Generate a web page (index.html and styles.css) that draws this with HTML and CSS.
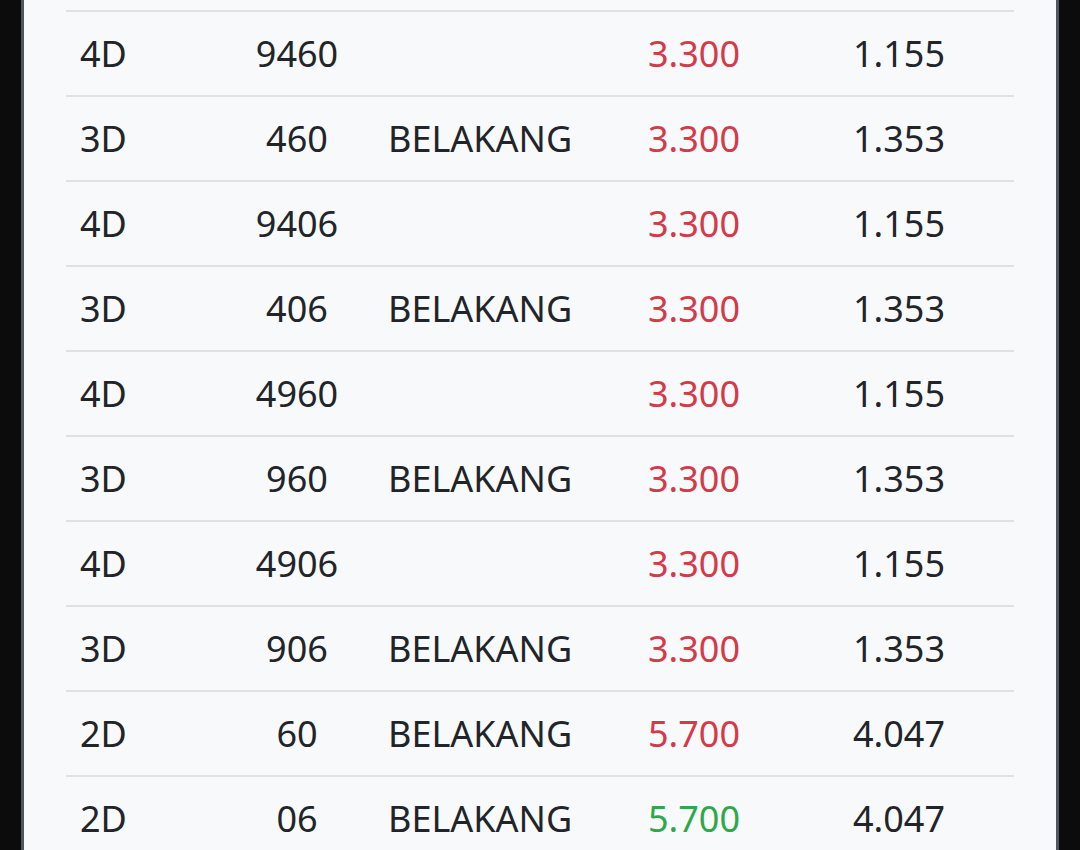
FILE: index.html
```html
<!DOCTYPE html>
<html>
<head>
<meta charset="utf-8">
<link rel="stylesheet" href="styles.css">
</head>
<body>
<div class="screen">
  <div class="panel">
    <div class="table">
      <div class="row"><div class="c1">4D</div><div class="c2">9460</div><div class="c3"></div><div class="c4 red">3.300</div><div class="c5">1.155</div></div>
      <div class="row"><div class="c1">3D</div><div class="c2">460</div><div class="c3">BELAKANG</div><div class="c4 red">3.300</div><div class="c5">1.353</div></div>
      <div class="row"><div class="c1">4D</div><div class="c2">9406</div><div class="c3"></div><div class="c4 red">3.300</div><div class="c5">1.155</div></div>
      <div class="row"><div class="c1">3D</div><div class="c2">406</div><div class="c3">BELAKANG</div><div class="c4 red">3.300</div><div class="c5">1.353</div></div>
      <div class="row"><div class="c1">4D</div><div class="c2">4960</div><div class="c3"></div><div class="c4 red">3.300</div><div class="c5">1.155</div></div>
      <div class="row"><div class="c1">3D</div><div class="c2">960</div><div class="c3">BELAKANG</div><div class="c4 red">3.300</div><div class="c5">1.353</div></div>
      <div class="row"><div class="c1">4D</div><div class="c2">4906</div><div class="c3"></div><div class="c4 red">3.300</div><div class="c5">1.155</div></div>
      <div class="row"><div class="c1">3D</div><div class="c2">906</div><div class="c3">BELAKANG</div><div class="c4 red">3.300</div><div class="c5">1.353</div></div>
      <div class="row"><div class="c1">2D</div><div class="c2">60</div><div class="c3">BELAKANG</div><div class="c4 red">5.700</div><div class="c5">4.047</div></div>
      <div class="row"><div class="c1">2D</div><div class="c2">06</div><div class="c3">BELAKANG</div><div class="c4 green">5.700</div><div class="c5">4.047</div></div>
    </div>
  </div>
</div>
</body>
</html>
```

FILE: styles.css
```css
html, body {
  margin: 0;
  padding: 0;
  background: #0c0c0c;
}
.screen {
  width: 1080px;
  height: 850px;
  overflow: hidden;
  display: flex;
  justify-content: flex-start;
  padding-left: 21px;
  box-sizing: border-box;
}
.panel {
  width: 1038px;
  height: 850px;
  flex-shrink: 0;
  background: #f8f9fa;
  border-left: 3px solid #50565d;
  border-right: 3px solid #50565d;
  padding: 10px 0 0 42px;
  box-sizing: border-box;
  font-family: "Noto Sans", sans-serif;
  font-size: 36px;
  color: #212529;
}
.table {
  width: 948px;
  border-top: 2px solid #dee2e6;
}
.row {
  display: grid;
  grid-template-columns: 164px 134px 270px 205px 175px;
  height: 85px;
  border-bottom: 2px solid #dee2e6;
  box-sizing: border-box;
  align-items: center;
}
.row > div {
  padding: 0 14px;
  white-space: nowrap;
}
.c2 {
  text-align: center;
}
.c3 {
  padding-left: 24px !important;
}
.red { color: #d33a4a; }
.green { color: #2ea84a; }
```
